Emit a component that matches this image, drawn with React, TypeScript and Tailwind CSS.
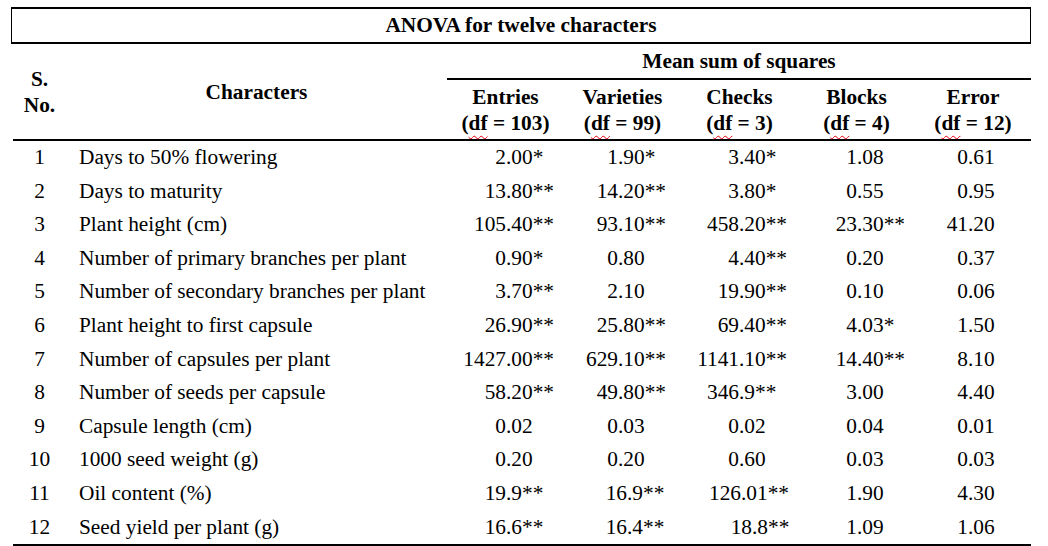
const cols = [
  { name: "Entries", df: "103", dec: 59 },
  { name: "Varieties", df: "99", dec: 54 },
  { name: "Checks", df: "3", dec: 58 },
  { name: "Blocks", df: "4", dec: 59 },
  { name: "Error", df: "12", dec: 53 },
];

// a value may carry its own decimal offset after "|" where the source isn't aligned
const rows: [string, string[]][] = [
  ["Days to 50% flowering", ["2.00*", "1.90*", "3.40*", "1.08", "0.61"]],
  ["Days to maturity", ["13.80**", "14.20**", "3.80*", "0.55", "0.95"]],
  ["Plant height (cm)", ["105.40**", "93.10**", "458.20**", "23.30**", "41.20"]],
  ["Number of primary branches per plant", ["0.90*", "0.80", "4.40**", "0.20", "0.37"]],
  ["Number of secondary branches per plant", ["3.70**", "2.10", "19.90**", "0.10", "0.06"]],
  ["Plant height to first capsule", ["26.90**", "25.80**", "69.40**", "4.03*", "1.50"]],
  ["Number of capsules per plant", ["1427.00**", "629.10**", "1141.10**", "14.40**", "8.10"]],
  ["Number of seeds per capsule", ["58.20**", "49.80**", "346.9**", "3.00", "4.40"]],
  ["Capsule length (cm)", ["0.02", "0.03", "0.02", "0.04", "0.01"]],
  ["1000 seed weight (g)", ["0.20", "0.20", "0.60", "0.03", "0.03"]],
  ["Oil content (%)", ["19.9**", "16.9**|63", "126.01**|60", "1.90", "4.30"]],
  ["Seed yield per plant (g)", ["16.6**", "16.4**|63", "18.8**|71", "1.09", "1.06"]],
];

const grid = "grid grid-cols-[53px_381px_117px_117px_117px_117px_116px]";

function Num({ value, dec }: { value: string; dec: number }) {
  const [text, own] = value.split("|");
  const i = text.indexOf(".");
  return (
    <div className="flex whitespace-nowrap">
      <span className="text-right" style={{ width: own ? Number(own) : dec }}>
        {text.slice(0, i)}
      </span>
      <span>{text.slice(i)}</span>
    </div>
  );
}

export default function App() {
  return (
    <div className="w-[1048px] h-[546px] bg-white text-black font-['Liberation_Serif',serif] text-[21.33px] pt-[7px] pl-[11px] overflow-hidden">
      {/* Title */}
      <div className="w-[1020px] h-[37px] border-x border-y-2 border-black flex items-center justify-center font-bold">
        ANOVA for twelve characters
      </div>

      <div className="ml-[2px] w-[1018px]">
        {/* Header */}
        <div className={`${grid} grid-rows-[36px_59px] border-b-2 border-black font-bold leading-[26px]`}>
          <div className="row-span-2 flex flex-col items-center justify-center">
            <span>S.</span>
            <span>No.</span>
          </div>
          <div className="row-span-2 flex items-center justify-center">Characters</div>
          <div className="col-span-5 border-b-2 border-black flex items-center justify-center">
            Mean sum of squares
          </div>
          {cols.map((c) => (
            <div key={c.name} className="flex flex-col items-center justify-center whitespace-nowrap">
              <span>{c.name}</span>
              <span>
                (<span className="underline decoration-wavy decoration-red-600 decoration-1 underline-offset-[5px]">df</span> = {c.df})
              </span>
            </div>
          ))}
        </div>

        {/* Body */}
        <div className="border-b-2 border-black">
          {rows.map(([name, vals], r) => (
            <div key={name} className={`${grid} h-[33.6px] leading-[33.6px]`}>
              <div className="text-center">{r + 1}</div>
              <div className="pl-[13px] whitespace-nowrap">{name}</div>
              {vals.map((v, k) => (
                <Num key={k} value={v} dec={cols[k].dec} />
              ))}
            </div>
          ))}
        </div>
      </div>
    </div>
  );
}
